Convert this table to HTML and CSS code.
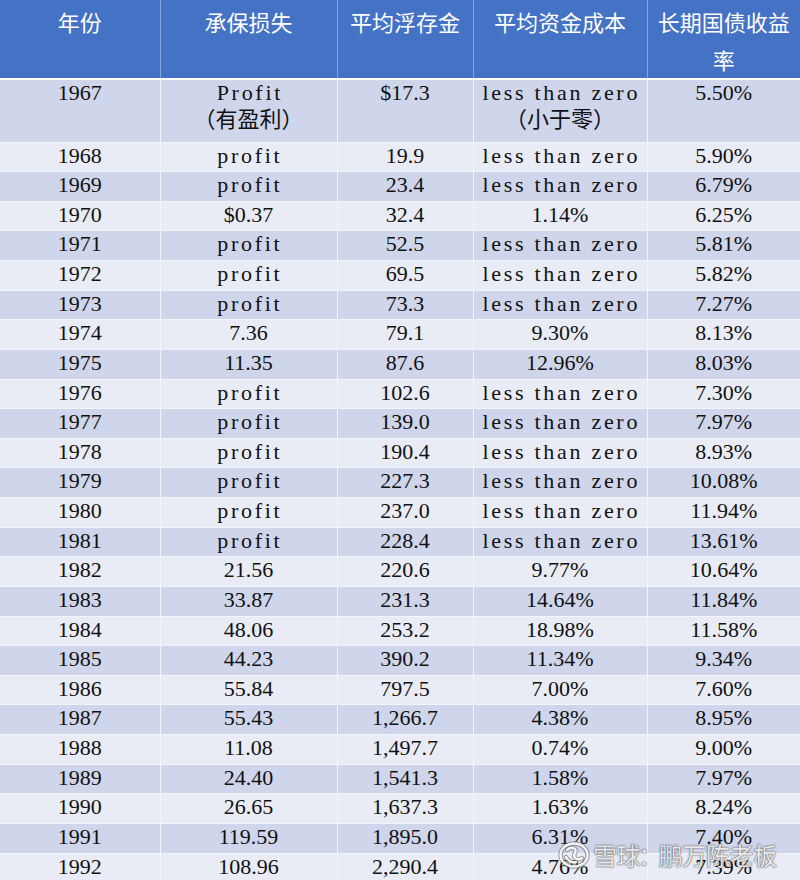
FILE: index.html
```html
<!DOCTYPE html>
<html lang="zh-CN">
<head>
<meta charset="utf-8">
<title>承保损失与浮存金</title>
<link rel="stylesheet" href="styles.css">
</head>
<body>
<div class="page">
<table class="data">
<colgroup>
<col class="c1"><col class="c2"><col class="c3"><col class="c4"><col class="c5">
</colgroup>
<thead>
<tr class="head"><th>年份</th><th>承保损失</th><th>平均浮存金</th><th>平均资金成本</th><th>长期国债收益率</th></tr>
</thead>
<tbody>
<tr class="tall odd"><td>1967</td><td><span class="word">Profit</span><br><span class="cn">（有盈利）</span></td><td>$17.3</td><td><span class="word">less than zero</span><br><span class="cn">（小于零）</span></td><td>5.50%</td></tr>
<tr class="even"><td>1968</td><td><span class="word">profit</span></td><td>19.9</td><td><span class="word">less than zero</span></td><td>5.90%</td></tr>
<tr class="odd"><td>1969</td><td><span class="word">profit</span></td><td>23.4</td><td><span class="word">less than zero</span></td><td>6.79%</td></tr>
<tr class="even"><td>1970</td><td>$0.37</td><td>32.4</td><td>1.14%</td><td>6.25%</td></tr>
<tr class="odd"><td>1971</td><td><span class="word">profit</span></td><td>52.5</td><td><span class="word">less than zero</span></td><td>5.81%</td></tr>
<tr class="even"><td>1972</td><td><span class="word">profit</span></td><td>69.5</td><td><span class="word">less than zero</span></td><td>5.82%</td></tr>
<tr class="odd"><td>1973</td><td><span class="word">profit</span></td><td>73.3</td><td><span class="word">less than zero</span></td><td>7.27%</td></tr>
<tr class="even"><td>1974</td><td>7.36</td><td>79.1</td><td>9.30%</td><td>8.13%</td></tr>
<tr class="odd"><td>1975</td><td>11.35</td><td>87.6</td><td>12.96%</td><td>8.03%</td></tr>
<tr class="even"><td>1976</td><td><span class="word">profit</span></td><td>102.6</td><td><span class="word">less than zero</span></td><td>7.30%</td></tr>
<tr class="odd"><td>1977</td><td><span class="word">profit</span></td><td>139.0</td><td><span class="word">less than zero</span></td><td>7.97%</td></tr>
<tr class="even"><td>1978</td><td><span class="word">profit</span></td><td>190.4</td><td><span class="word">less than zero</span></td><td>8.93%</td></tr>
<tr class="odd"><td>1979</td><td><span class="word">profit</span></td><td>227.3</td><td><span class="word">less than zero</span></td><td>10.08%</td></tr>
<tr class="even"><td>1980</td><td><span class="word">profit</span></td><td>237.0</td><td><span class="word">less than zero</span></td><td>11.94%</td></tr>
<tr class="odd"><td>1981</td><td><span class="word">profit</span></td><td>228.4</td><td><span class="word">less than zero</span></td><td>13.61%</td></tr>
<tr class="even"><td>1982</td><td>21.56</td><td>220.6</td><td>9.77%</td><td>10.64%</td></tr>
<tr class="odd"><td>1983</td><td>33.87</td><td>231.3</td><td>14.64%</td><td>11.84%</td></tr>
<tr class="even"><td>1984</td><td>48.06</td><td>253.2</td><td>18.98%</td><td>11.58%</td></tr>
<tr class="odd"><td>1985</td><td>44.23</td><td>390.2</td><td>11.34%</td><td>9.34%</td></tr>
<tr class="even"><td>1986</td><td>55.84</td><td>797.5</td><td>7.00%</td><td>7.60%</td></tr>
<tr class="odd"><td>1987</td><td>55.43</td><td>1,266.7</td><td>4.38%</td><td>8.95%</td></tr>
<tr class="even"><td>1988</td><td>11.08</td><td>1,497.7</td><td>0.74%</td><td>9.00%</td></tr>
<tr class="odd"><td>1989</td><td>24.40</td><td>1,541.3</td><td>1.58%</td><td>7.97%</td></tr>
<tr class="even"><td>1990</td><td>26.65</td><td>1,637.3</td><td>1.63%</td><td>8.24%</td></tr>
<tr class="odd"><td>1991</td><td>119.59</td><td>1,895.0</td><td>6.31%</td><td>7.40%</td></tr>
<tr class="even"><td>1992</td><td>108.96</td><td>2,290.4</td><td>4.76%</td><td>7.39%</td></tr>
</tbody>
</table>
<div class="watermark">
<svg class="wm-logo" width="32" height="28" viewBox="0 0 32 28">
<g fill="none" stroke-linecap="round">
<ellipse cx="16" cy="14" rx="13.5" ry="11.5" stroke="rgba(100,100,100,0.6)" stroke-width="4.4"/>
<path d="M9 9 C13 5, 20 7, 17 12 C14 17, 20 20, 24 17" stroke="rgba(100,100,100,0.6)" stroke-width="4.4"/>
<path d="M8 16 C10 20, 14 22, 18 21" stroke="rgba(100,100,100,0.6)" stroke-width="4.4"/>
<ellipse cx="16" cy="14" rx="13.5" ry="11.5" stroke="rgba(255,255,255,0.92)" stroke-width="2.4"/>
<path d="M9 9 C13 5, 20 7, 17 12 C14 17, 20 20, 24 17" stroke="rgba(255,255,255,0.92)" stroke-width="2.4"/>
<path d="M8 16 C10 20, 14 22, 18 21" stroke="rgba(255,255,255,0.92)" stroke-width="2.4"/>
</g>
</svg>
<span class="wm-text">雪球<span class="wm-colon">：</span>鹏万陈老板</span>
</div>
</div>
</body>
</html>
```
FILE: styles.css
```css
html, body {
  margin: 0;
  padding: 0;
  background: #e9ebf5;
}
.page {
  position: relative;
  width: 800px;
  height: 880px;
  overflow: hidden;
}
.data {
  width: 800px;
  table-layout: fixed;
  border-collapse: collapse;
  font-family: "Liberation Serif", "Noto Sans CJK SC", serif;
  font-size: 22px;
  color: #111;
}
.c1 { width: 160px; }
.c2 { width: 177px; }
.c3 { width: 136px; }
.c4 { width: 174px; }
.c5 { width: 153px; }
.head th {
  background: #4472c4;
  color: #fff;
  font-family: "Noto Sans CJK SC", sans-serif;
  font-weight: 400;
  font-size: 22px;
  line-height: 38px;
  height: 74px;
  padding: 2px 8px 0;
  box-sizing: border-box;
  vertical-align: top;
  text-align: center;
  border-right: 1px solid #86a3da;
  border-bottom: 2px solid #ffffff;
}
.head th:last-child { border-right: none; }
.data td {
  text-align: center;
  vertical-align: top;
  padding: 0 2px;
  line-height: 25px;
  height: 29.64px;
  box-sizing: border-box;
  border-right: 1px solid #f4f5fb;
  border-bottom: 1px solid #f4f5fb;
  white-space: nowrap;
}
.data td:last-child { border-right: none; }
.tall td {
  height: 63px;
  padding-top: 0;
}
.odd td { background: #cfd5ea; }
.even td { background: #e9ebf5; }
.word {
  letter-spacing: 2.7px;
  margin-right: -2.7px;
}
.cn {
  font-family: "Noto Sans CJK SC", sans-serif;
  font-size: 22px;
}
.watermark {
  position: absolute;
  left: 558px;
  top: 840px;
  display: flex;
  align-items: center;
  gap: 3px;
  white-space: nowrap;
}
.wm-logo {
  display: block;
}
.wm-text {
  font-family: "Noto Sans CJK SC", sans-serif;
  font-size: 24px;
  line-height: 30px;
  letter-spacing: -0.4px;
  color: rgba(255, 255, 255, 0.9);
  text-shadow: 0 0 1px rgba(70, 70, 70, 0.95), 0 0 1px rgba(70, 70, 70, 0.8), 0 0 3px rgba(70, 70, 70, 0.35);
}
.wm-colon {
  margin: 0 -3px 0 -2px;
}
```
